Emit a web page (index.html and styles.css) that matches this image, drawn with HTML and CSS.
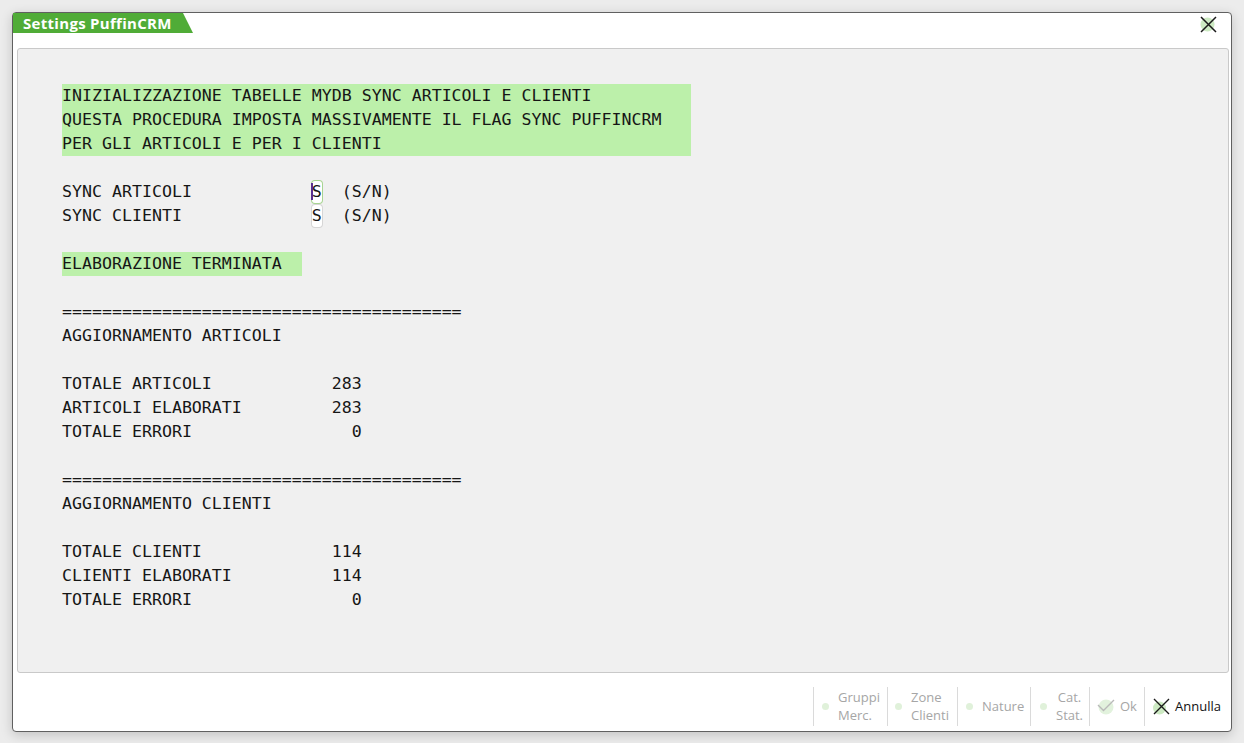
FILE: index.html
```html
<!DOCTYPE html>
<html lang="it">
<head>
<meta charset="utf-8">
<title>Settings PuffinCRM</title>
<link rel="stylesheet" href="styles.css">
</head>
<body>
<div class="win">
  <div class="head">
    <div class="tab">Settings PuffinCRM</div>
    <svg class="close" width="17" height="17" viewBox="0 0 17 17">
      <circle cx="7.5" cy="8.5" r="7" fill="#cdeac3"/>
      <path d="M1 1 L16 16 M16 1 L1 16" stroke="#1a1a1a" stroke-width="1.5" fill="none"/>
    </svg>
  </div>
  <div class="panel">
    <div class="term">
      <div class="hl hl-wide">
        <div class="ln">INIZIALIZZAZIONE TABELLE MYDB SYNC ARTICOLI E CLIENTI</div>
        <div class="ln">QUESTA PROCEDURA IMPOSTA MASSIVAMENTE IL FLAG SYNC PUFFINCRM</div>
        <div class="ln">PER GLI ARTICOLI E PER I CLIENTI</div>
      </div>
      <div class="ln"> </div>
      <div class="ln">SYNC ARTICOLI            <span class="fld fld-focus">S</span>  (S/N)</div>
      <div class="ln">SYNC CLIENTI             <span class="fld">S</span>  (S/N)</div>
      <div class="ln"> </div>
      <div class="hl hl-short"><div class="ln">ELABORAZIONE TERMINATA</div></div>
      <div class="ln"> </div>
      <div class="ln">========================================</div>
      <div class="ln">AGGIORNAMENTO ARTICOLI</div>
      <div class="ln"> </div>
      <div class="ln">TOTALE ARTICOLI            283</div>
      <div class="ln">ARTICOLI ELABORATI         283</div>
      <div class="ln">TOTALE ERRORI                0</div>
      <div class="ln"> </div>
      <div class="ln">========================================</div>
      <div class="ln">AGGIORNAMENTO CLIENTI</div>
      <div class="ln"> </div>
      <div class="ln">TOTALE CLIENTI             114</div>
      <div class="ln">CLIENTI ELABORATI          114</div>
      <div class="ln">TOTALE ERRORI                0</div>
    </div>
  </div>
  <div class="foot">
    <div class="btn w-gruppi"><span class="dot"></span><span class="lbl">Gruppi<br>Merc.</span></div>
    <div class="btn w-zone"><span class="dot"></span><span class="lbl">Zone<br>Clienti</span></div>
    <div class="btn w-nature"><span class="dot"></span><span class="lbl">Nature</span></div>
    <div class="btn w-cat"><span class="dot"></span><span class="lbl lbl-center">Cat.<br>Stat.</span></div>
    <div class="btn w-ok">
      <svg class="ico" width="18" height="18" viewBox="0 0 18 18">
        <circle cx="9" cy="10" r="7.5" fill="#e2f2dd"/>
        <path d="M1 8 L6.5 13.5 L17 3" stroke="#b9b9b9" stroke-width="1.4" fill="none"/>
      </svg>
      <span class="lbl">Ok</span>
    </div>
    <div class="btn w-annulla">
      <svg class="ico" width="17" height="17" viewBox="0 0 17 17">
        <circle cx="6.5" cy="10" r="6.5" fill="#cdeac3"/>
        <path d="M1 1 L16 16 M16 1 L1 16" stroke="#1a1a1a" stroke-width="1.4" fill="none"/>
      </svg>
      <span class="lbl lbl-dark">Annulla</span>
    </div>
  </div>
</div>
</body>
</html>
```
FILE: styles.css
```css
* { box-sizing: border-box; }

html, body {
  margin: 0;
  padding: 0;
  background: #ececec;
}

body {
  width: 1244px;
  height: 743px;
  overflow: hidden;
}

.win {
  margin: 12px 0 0 12px;
  width: 1220px;
  height: 720px;
  border: 1px solid #606060;
  border-radius: 4px;
  background: #ffffff;
  display: flex;
  flex-direction: column;
  box-shadow: 0 3px 12px rgba(0, 0, 0, 0.18);
}

.head {
  height: 35px;
  flex: none;
  display: flex;
  justify-content: space-between;
  align-items: flex-start;
}

.tab {
  width: 180px;
  height: 20px;
  padding-left: 10px;
  background: #50ac37;
  color: #ffffff;
  font-family: "Open Sans", "Noto Sans", sans-serif;
  font-weight: 700;
  font-size: 15px;
  letter-spacing: 0.3px;
  line-height: 20px;
  white-space: nowrap;
  clip-path: polygon(0 0, 170px 0, 180px 100%, 0 100%);
}

.close {
  margin: 3px 14px 0 0;
  display: block;
}

.panel {
  flex: none;
  height: 625px;
  margin: 0 2px 0 4px;
  border: 1px solid #c9c9c9;
  border-radius: 3px;
  background: #f0f0f0;
  padding: 35px 44px;
}

.term {
  font-family: "DejaVu Sans Mono", "Liberation Mono", monospace;
  font-size: 16.6px;
  color: #161616;
}

.ln {
  height: 24px;
  line-height: 24px;
  white-space: pre;
}

.hl { background: #bcf0aa; }
.hl-wide { width: 63ch; }
.hl-short { width: 24ch; }

.fld {
  position: relative;
  display: inline-block;
  width: 1ch;
  height: 22px;
  line-height: 22px;
  vertical-align: top;
  margin-top: 1px;
  background: #ffffff;
  border-radius: 3px;
  box-shadow: 0 0 0 1px #d6d6d6;
}

.fld-focus {
  box-shadow: 0 0 0 1px #a8d592;
}

.fld-focus::before {
  content: "";
  position: absolute;
  left: -1px;
  top: 2px;
  width: 2px;
  height: 17px;
  background: #5a2f8f;
}

.foot {
  flex: 1;
  display: flex;
  justify-content: flex-end;
  align-items: center;
  padding-top: 8px;
  font-family: "Open Sans", "Noto Sans", sans-serif;
  font-size: 13px;
  color: #a6a6a6;
}

.btn {
  height: 39px;
  border-left: 1px solid #dadada;
  display: flex;
  align-items: center;
  padding-left: 8px;
}

.w-gruppi { width: 74px; }
.w-zone { width: 70px; padding-left: 7px; }
.w-nature { width: 73px; }
.w-cat { width: 59px; padding-left: 9px; }
.w-ok { width: 55px; padding-left: 7px; }
.w-annulla { width: 87px; padding-left: 8px; }

.dot {
  width: 7px;
  height: 7px;
  border-radius: 50%;
  background: #e0f1da;
  margin-right: 9px;
  flex: none;
}

.lbl {
  line-height: 18px;
  white-space: nowrap;
}

.lbl-center { text-align: center; }

.ico {
  display: block;
  flex: none;
  margin-right: 5px;
}

.lbl-dark { color: #111111; }
```
